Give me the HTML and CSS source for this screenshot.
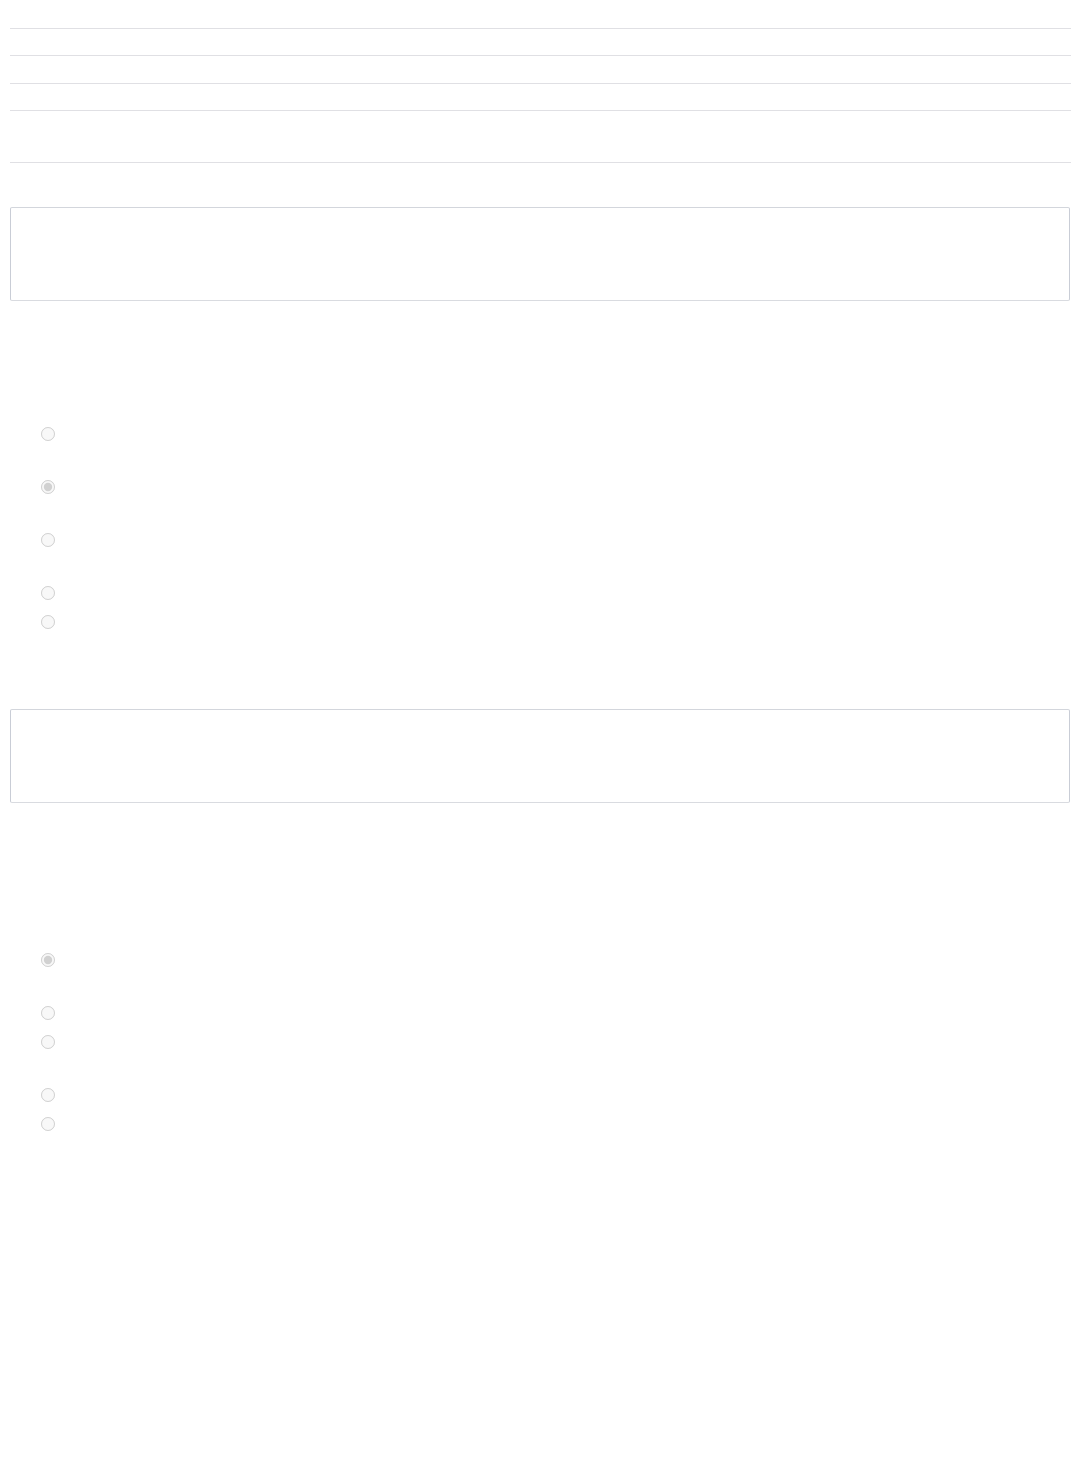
FILE: index.html
```html
<!DOCTYPE html>
<html lang="en">
<head>
    <meta charset="UTF-8">
    <meta name="viewport" content="width=device-width, initial-scale=1.0">
    <title>Survey</title>
    <link rel="stylesheet" href="styles.css">
</head>
<body>
  <div class="sheet">
    <div class="rules">
      <div class="rule r1"></div>
      <div class="rule r2"></div>
      <div class="rule r3"></div>
      <div class="rule r4"></div>
      <div class="rule r5"></div>
    </div>

    <div class="field first"></div>
    <div class="question q1"></div>
    <div class="options">
      <label class="option tall"><input type="radio" name="a" disabled></label>
      <label class="option tall"><input type="radio" name="a" disabled checked></label>
      <label class="option tall"><input type="radio" name="a" disabled></label>
      <label class="option"><input type="radio" name="a" disabled></label>
      <label class="option"><input type="radio" name="a" disabled></label>
    </div>

    <div class="field"></div>
    <div class="question q2"></div>
    <div class="options">
      <label class="option tall"><input type="radio" name="b" disabled checked></label>
      <label class="option"><input type="radio" name="b" disabled></label>
      <label class="option tall"><input type="radio" name="b" disabled></label>
      <label class="option"><input type="radio" name="b" disabled></label>
      <label class="option"><input type="radio" name="b" disabled></label>
    </div>
  </div>
</body>
</html>
```

FILE: styles.css
```css
body {
  margin: 0;
  background: white;
  font-family: "Liberation Sans", Arial, sans-serif;
  font-size: 14px;
  color: #333;
}

.sheet {
  padding: 0 8px 0 10px;
}

.rule {
  border-bottom: 1px solid #e0e0e4;
}
.r1 { height: 28px; }
.r2 { height: 26px; }
.r3 { height: 27px; }
.r4 { height: 26px; }
.r5 { height: 51px; }

.field {
  height: 92px;
  margin-right: 1px;
  border: 1px solid #c9cdd6;
  border-top-color: #d3d6dc;
  border-bottom-color: #d9dbe0;
  border-radius: 2px;
}
.field.first {
  margin-top: 44px;
}

.options {
  display: flex;
  flex-direction: column;
  padding-left: 31px;
  margin-bottom: 66px;
}

.option {
  display: flex;
  align-items: flex-start;
  height: 29px;
}
.option.tall {
  height: 53px;
}

.option input {
  width: 14px;
  height: 14px;
  margin: 1px 0 0;
}

.q1 { height: 125px; }
.q2 { height: 149px; }
```
